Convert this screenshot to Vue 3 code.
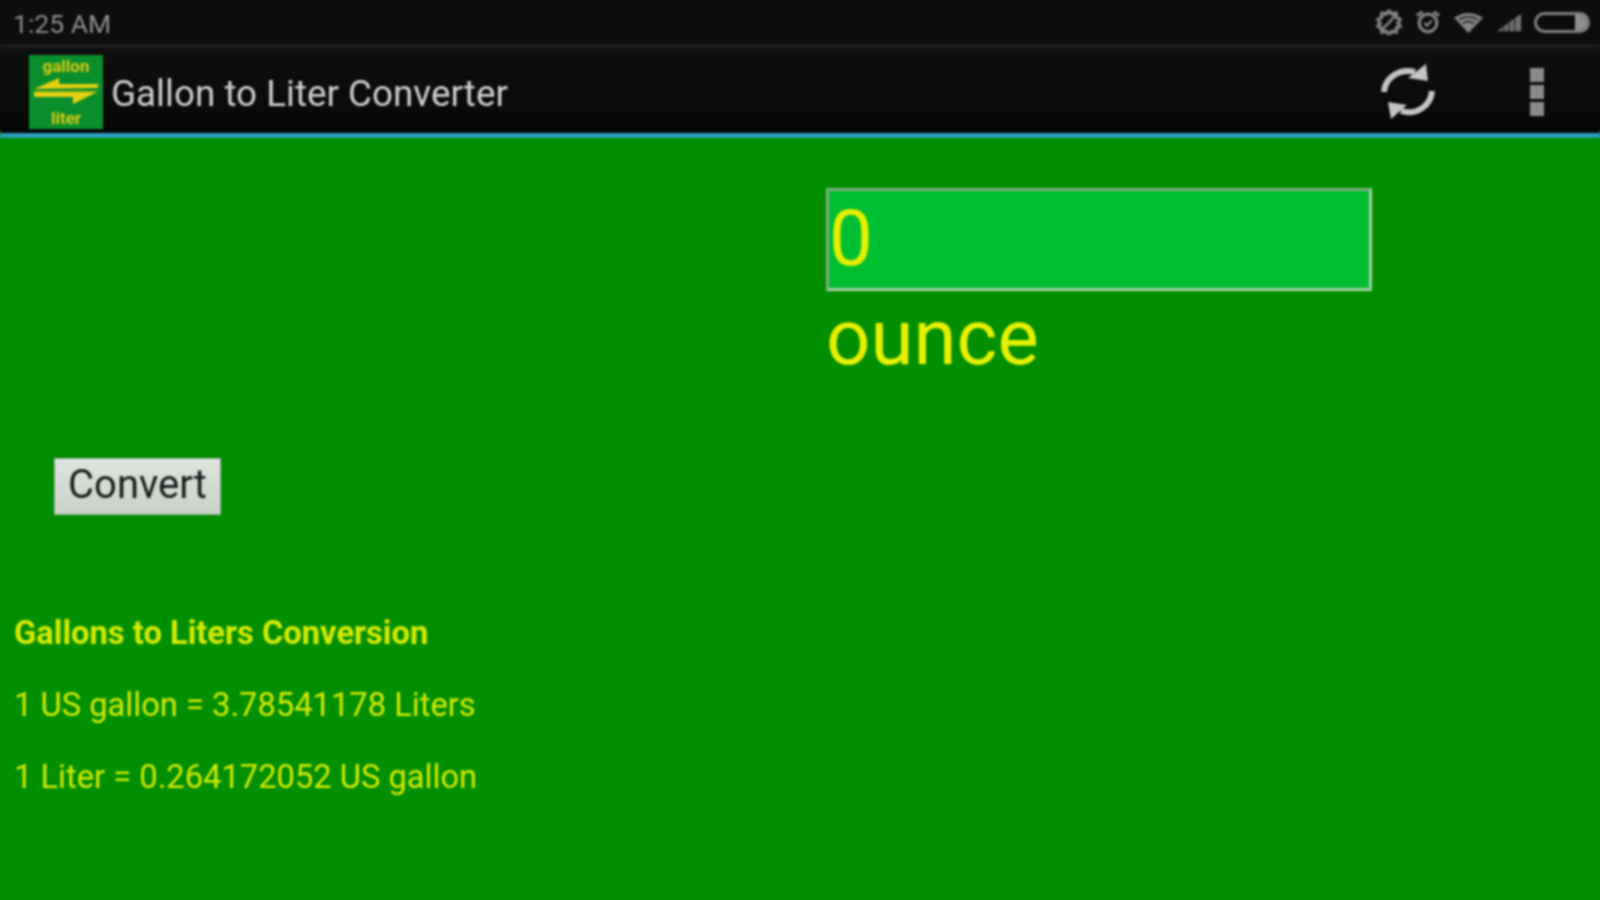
<template>
  <div class="screen">
    <div class="status">
      <span class="time">1:25 AM</span>
      <div class="status-icons">
        <svg width="28" height="26" viewBox="0 0 30 28">
          <path d="M15 2.500l3.200 2.800 4.300-.6.600 4.200 3.600 2.500-2 3.600 2 3.600-3.600 2-.6 4.200-4.300-.6-3.200 2.800-3.200-2.800-4.300.6-.6-4.200-3.600-2 2-3.600-2-3.600 3.600-2.500.6-4.200 4.300.6z" fill="none" stroke="#808080" stroke-width="4"/>
          <path d="M7 23L24 5" stroke="#808080" stroke-width="3"/>
        </svg>
        <svg width="26" height="26" viewBox="0 0 28 28">
          <circle cx="14" cy="15" r="9.500" fill="none" stroke="#808080" stroke-width="3.500"/>
          <path d="M10 15l3 3 5-6" fill="none" stroke="#808080" stroke-width="2.500"/>
          <path d="M2 7l6-4M26 7l-6-4" stroke="#808080" stroke-width="3.500"/>
        </svg>
        <svg width="31" height="23" viewBox="0 0 32 24">
          <path d="M1 7Q16-3 31 7L16 23z" fill="#858585"/>
          <path d="M6 9Q16 3 26 9M10 13Q16 9 22 13" fill="none" stroke="#222" stroke-width="1.500"/>
        </svg>
        <svg width="26" height="22" viewBox="0 0 28 22">
          <path d="M1 21L27 2V21z" fill="#6f6f6f"/>
          <path d="M8 21V14M14 21V10M20 21V6" stroke="#222" stroke-width="1.200"/>
        </svg>
        <div class="battery"><span class="battery-fill"></span></div>
      </div>
    </div>

    <div class="actionbar">
      <div class="logo">
        <span class="logo-word">gallon</span>
        <svg width="68" height="28" viewBox="0 0 68 28">
          <path d="M27 0V6H66V10L2 11zM2 13.500H66L41 26V19H2z" fill="#e5cf10"/>
        </svg>
        <span class="logo-word">liter</span>
      </div>
      <h1 class="title">Gallon to Liter Converter</h1>
      <svg class="refresh" width="54" height="56" viewBox="0 0 54 56">
        <path d="M3 28C4 14 18 4 34 8" fill="none" stroke="#c4c4c4" stroke-width="6"/>
        <path d="M45 0L47 17 27 14z" fill="#c4c4c4"/>
        <path d="M51 27C50 41 36 52 20 47" fill="none" stroke="#c4c4c4" stroke-width="6"/>
        <path d="M10 55L7 38 26 41z" fill="#c4c4c4"/>
      </svg>
      <div class="overflow"><i></i><i></i><i></i></div>
    </div>

    <main class="content">
      <div class="entry">
        <div class="field">0</div>
        <div class="unit">ounce</div>
      </div>
      <button class="convert">Convert</button>
      <div class="info">
        <p class="info-head">Gallons to Liters Conversion</p>
        <p>1 US gallon = 3.78541178 Liters</p>
        <p>1 Liter = 0.264172052 US gallon</p>
      </div>
    </main>
  </div>
</template>

<script setup>
</script>

<style>
html, body {
  margin: 0;
  background: linear-gradient(#0d0d0d 130px, #008f00 130px);
}
</style>

<style scoped>
.screen {
  width: 1600px;
  height: 900px;
  overflow: hidden;
  display: flex;
  flex-direction: column;
  background: #008f00;
  font-family: Roboto, "Liberation Sans", sans-serif;
  filter: blur(0.8px);
}
.status {
  flex: none;
  box-sizing: border-box;
  height: 48px;
  display: flex;
  align-items: center;
  justify-content: space-between;
  padding: 3px 10px 0 13px;
  background: #0d0d0d;
  border-bottom: 4px solid #1b1b1b;
}
.time {
  color: #8e8e8e;
  font-size: 26.500px;
}
.status-icons {
  display: flex;
  align-items: center;
  gap: 12px;
  margin-top: -3px;
}
.battery {
  width: 50px;
  height: 15px;
  border: 3px solid #808080;
  border-radius: 11px;
  display: flex;
  justify-content: flex-end;
  overflow: hidden;
}
.battery-fill {
  width: 12px;
  background: #8f8f8f;
}
.actionbar {
  flex: none;
  height: 82px;
  display: flex;
  align-items: center;
  padding-left: 29px;
  padding-top: 3px;
  background: linear-gradient(#0f0f0f, #060808);
  border-bottom: 5px solid #2a9fc0;
}
.logo {
  width: 74px;
  height: 74px;
  background: #0b8f2c;
  display: flex;
  flex-direction: column;
  align-items: center;
  justify-content: space-between;
  flex: none;
}
.logo-word {
  color: #d9c914;
  font-size: 17px;
  font-weight: 700;
  line-height: 22px;
}
.logo svg {
  display: block;
}
.title {
  margin: 3px 0 0 8px;
  color: #cfcfcf;
  font-size: 36.800px;
  font-weight: 400;
  flex: 1;
}
.refresh {
  margin-right: 95px;
}
.overflow {
  display: flex;
  flex-direction: column;
  gap: 3px;
  margin-right: 56px;
}
.overflow i {
  display: block;
  width: 14px;
  height: 14px;
  background: #8a8a8a;
}
.content {
  flex: 1;
  display: flex;
  flex-direction: column;
  align-items: flex-start;
  padding-top: 50px;
}
.entry {
  margin-left: 826px;
}
.field {
  height: 97px;
  width: 540px;
  background: #00bf30;
  border: 3px solid #a6cfa6;
  border-top-color: #7faa7f;
  border-left-color: #7faa7f;
  color: #e6f000;
  font-size: 78px;
  line-height: 95px;
}
.unit {
  color: #e6f000;
  font-size: 78px;
  line-height: 90px;
  margin-top: 2px;
}
.convert {
  margin: 75px 0 0 54px;
  width: 167px;
  height: 57px;
  border: 1px solid #9aa89a;
  background: linear-gradient(#dfe4df, #c8d1c8);
  color: #1c1c1c;
  font-family: inherit;
  font-size: 40px;
  line-height: 52px;
  padding: 0 0 4px;
}
.info {
  margin-left: 14px;
  margin-top: 100px;
  color: #d6ea00;
  font-size: 32.700px;
}
.info p {
  margin: 0 0 36px;
  line-height: 36px;
}
.info-head {
  font-weight: 700;
}
</style>
